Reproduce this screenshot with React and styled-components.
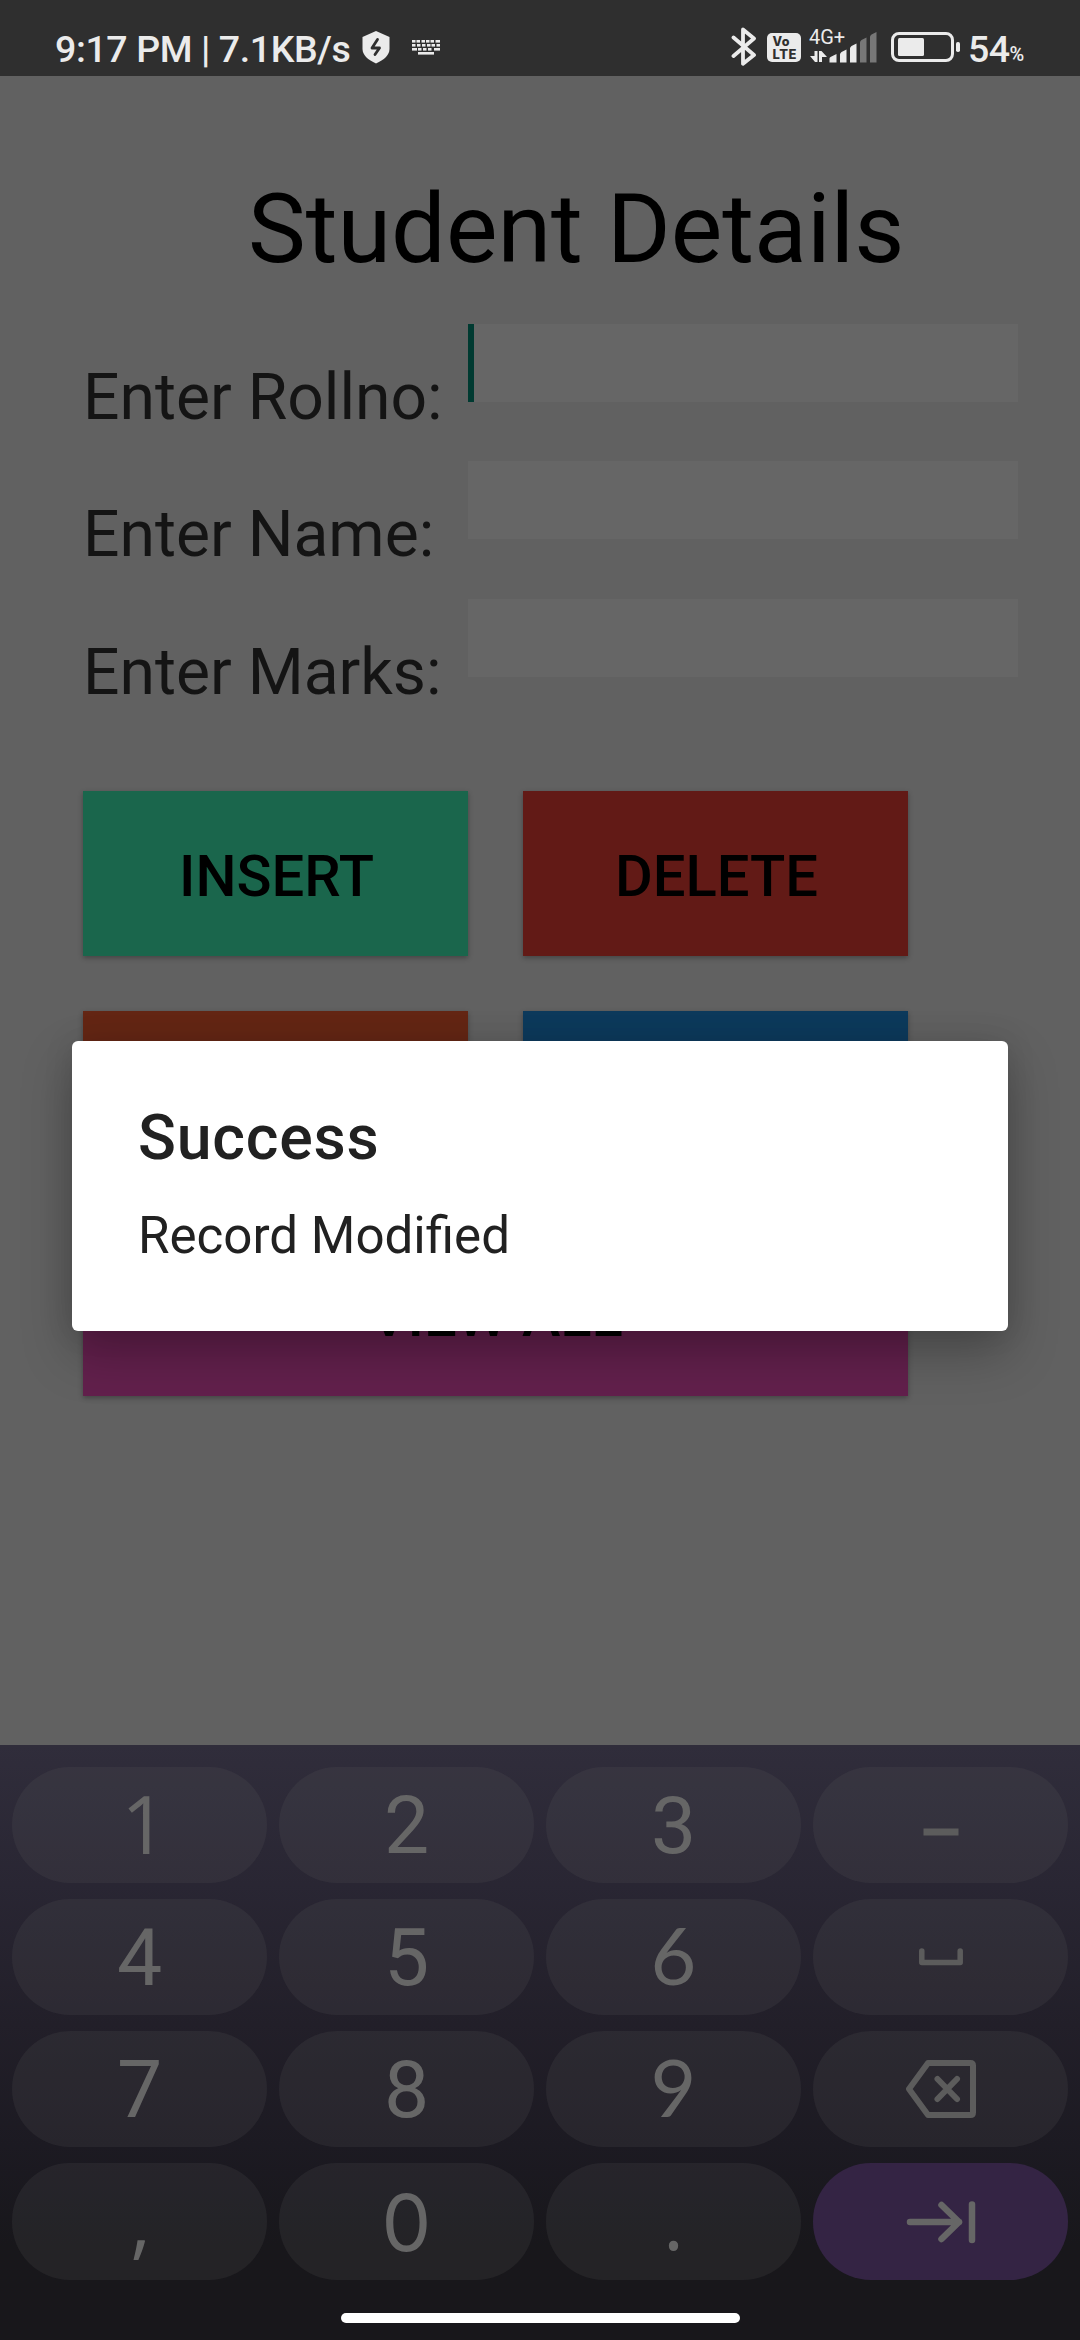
import React from "react";
import styled, { createGlobalStyle, css } from "styled-components";

const Global = createGlobalStyle`
  * { box-sizing: border-box; }
  html, body { margin: 0; padding: 0; background: #616161; }
  body { font-family: Roboto, "Noto Sans", sans-serif; overflow: hidden; }
  svg { flex: none; }
`;

const Screen = styled.div`
  position: relative;
  width: 1080px;
  height: 2340px;
  display: flex;
  flex-direction: column;
  background: #616161;
  overflow: hidden;
`;

const StatusBar = styled.header`
  display: flex;
  justify-content: space-between;
  height: 76px;
  padding: 20px 0 0 55px;
  background: #2f2f2f;
  color: #ebebeb;
`;

const StatusGroup = styled.div`
  display: flex;
  height: 56px;
  width: ${(p) => p.$width || "auto"};
`;

const Clock = styled.span`
  width: 307px;
  font-size: 37.5px;
  font-weight: 500;
  letter-spacing: -0.4px;
  line-height: 58px;
  white-space: pre;
`;

const Network = styled.div`
  display: flex;
  flex-direction: column;
  flex: none;
  width: 82px;
`;

const NetworkType = styled.span`
  height: 24px;
  padding-top: 5px;
  font-size: 20px;
  line-height: 24px;
`;

const Percent = styled.span`
  width: ${(p) => (p.$small ? "auto" : "41.5px")};
  font-size: ${(p) => (p.$small ? "20px" : "37.5px")};
  font-weight: 500;
  letter-spacing: -0.45px;
  line-height: ${(p) => (p.$small ? "68px" : "58px")};
`;

const Main = styled.main`
  flex: 1;
  padding: 97px 62px 0 83px;
`;

const Title = styled.h1`
  margin: 0 0 39px;
  padding-left: 165px;
  font-size: 97.2px;
  font-weight: 400;
  line-height: 112px;
  color: #000;
  white-space: nowrap;
`;

const Form = styled.div`
  display: grid;
  grid-template-rows: 137px 138px 137px;
`;

const Field = styled.label`
  display: flex;
`;

const FieldLabel = styled.span`
  width: 385px;
  padding-top: 36px;
  font-size: 64.2px;
  line-height: 75px;
  color: #141414;
  white-space: nowrap;
`;

const Input = styled.div`
  flex: 1;
  height: 78px;
  background: #666;
  border-left: ${(p) => (p.$focused ? "6px solid #003a31" : "0")};
`;

const Buttons = styled.div`
  display: grid;
  grid-template-columns: 385px 385px;
  grid-auto-rows: 165px;
  gap: 55px;
  margin-top: 55px;
`;

const Button = styled.button`
  grid-column: ${(p) => (p.$wide ? "1 / -1" : "auto")};
  border: 0;
  padding: 4px 0 0 2px;
  background: ${(p) => p.$color};
  color: #000;
  font: 500 57.9px/68px Roboto, sans-serif;
  box-shadow: 0 2px 5px rgba(0, 0, 0, 0.3);
`;

const Keyboard = styled.section`
  height: 595px;
  padding: 22px 12px 0;
  background: linear-gradient(#302d3b 0px, #292633 140px, #221f29 280px, #1c1a22 400px, #18171b 500px, #18171b 595px);
`;

const Keys = styled.div`
  display: grid;
  grid-template-columns: repeat(4, 255px);
  grid-template-rows: 116px 116px 116px 117px;
  gap: 16px 12px;
`;

const Key = styled.div`
  display: flex;
  align-items: center;
  justify-content: center;
  border-radius: 58px;
  background: ${(p) => (p.$accent ? "#342444" : "rgba(102, 102, 102, 0.16)")};
  color: ${(p) => (p.$accent ? "#666" : "#5c5c5c")};
`;

const faces = {
  roboto: css`font-family: Roboto, sans-serif; font-size: 80.5px; padding-top: 1px;`,
  lato: css`font-family: Lato, sans-serif; font-size: 79px; padding-bottom: 5px;`,
  inter: css`font-family: Inter, sans-serif; font-size: 79px;`,
  open: css`font-family: "Open Sans", sans-serif; font-size: 80px; padding-bottom: 5px;`,
};

const Glyph = styled.span`
  ${(p) => faces[p.$face || "roboto"]}
  padding-left: ${(p) => p.$indent || 0}px;
  line-height: 116px;
  color: #666;
`;

const HomeIndicator = styled.div`
  width: 399px;
  height: 10px;
  margin: 33px auto 0;
  border-radius: 5px;
  background: #fff;
`;

const Dialog = styled.div`
  position: absolute;
  left: 72px;
  top: 1041px;
  width: 936px;
  height: 290px;
  padding: 59px 66px 0;
  border-radius: 6px;
  background: #fff;
  color: #212121;
  box-shadow: 0 22px 50px rgba(0, 0, 0, 0.26), 0 0 30px rgba(0, 0, 0, 0.1);
`;

const DialogTitle = styled.h2`
  margin: 0;
  font-size: 62.6px;
  font-weight: 500;
  letter-spacing: 0.8px;
  line-height: 75px;
`;

const DialogText = styled.p`
  margin: 31px 0 0;
  font-size: 51.1px;
  line-height: 60px;
`;

const DashSlot = styled.span`
  display: flex;
  padding-top: 14px;
`;

const ShieldIcon = () => (
  <svg width="28" height="56" viewBox="362 20 28 56">
    <path d="M376 31L389.5 37V49C389.5 55 384 60 376 63.5C368 60 362.5 55 362.5 49V37Z" fill="#ebebeb" />
    <path d="M377.5 39.5L372 48H379.5L375 54.5" fill="none" stroke="#2f2f2f" strokeWidth="2.8" strokeLinecap="round" strokeLinejoin="round" />
  </svg>
);

const keyRows = [
  [40, [412, 416.5, 421.5, 426, 430.5, 435.5]],
  [44, [412, 417, 422, 427, 431.5, 436.5]],
  [48, [412, 418, 423, 428, 434]],
];

const KeyboardIcon = () => (
  <svg width="74" height="56" viewBox="390 20 74 56" fill="#ebebeb">
    {keyRows.map(([y, xs]) => xs.map((x, i) => (
      <rect key={`${x}-${y}`} x={x} y={y} width={i === xs.length - 1 ? 440 - x : i === 0 && y === 48 ? 5 : 3.5} height="2.6" />
    )))}
    <rect x="418" y="52" width="16" height="2.6" />
  </svg>
);

const BluetoothIcon = () => (
  <svg width="33" height="56" viewBox="731 20 33 56" fill="none" stroke="#ebebeb" strokeWidth="3.8" strokeLinecap="round" strokeLinejoin="round">
    <path d="M733.5 37.5L754 55L743 63.8V29.5L754 38.5L733.5 56" />
  </svg>
);

const VolteIcon = () => (
  <svg width="45" height="56" viewBox="764 20 45 56">
    <rect x="767" y="33" width="34" height="29" rx="5" fill="#ebebeb" />
    <g fill="#2f2f2f" fontFamily="Inter, sans-serif" fontWeight="800">
      <text x="772.5" y="46" fontSize="12.5" textLength="17">Vo</text>
      <text x="772.5" y="58.5" fontSize="13" textLength="24">LTE</text>
    </g>
  </svg>
);

const SignalIcon = () => (
  <svg width="70" height="32" viewBox="809 44 70 32" overflow="visible" fill="#ebebeb">
    <path d="M814.5 51H817.5V62H815L810 56H814.5ZM819 51H821.5L827 57H822V62H819Z" />
    <path d="M829.5 62.5V58.5Q829.5 57.5 830.5 57L836.5 54V62.5ZM840 62.5V54.5Q840 53 841.5 52L846.5 49.5V62.5ZM850 62.5V48.5Q850 47 851.5 46L856.5 43.5V62.5Z" />
    <path d="M860 62.5V42.5Q860 41 861.5 40L866.5 37.5V62.5ZM870 62.5V37Q870 35.5 871.5 34.5L876.5 32V62.5Z" fill="#777" />
  </svg>
);

const BatteryIcon = () => (
  <svg width="77" height="56" viewBox="891 20 77 56">
    <rect x="892.5" y="33.5" width="60" height="27" rx="6.5" fill="none" stroke="#ebebeb" strokeWidth="3" />
    <rect x="898" y="38" width="26" height="18" rx="1.5" fill="#ebebeb" />
    <rect x="956" y="42" width="4" height="10" rx="1.8" fill="#ebebeb" />
  </svg>
);

const DashIcon = () => (
  <svg width="36" height="8" viewBox="0 0 36 8">
    <rect x="0.5" y="0.5" width="35" height="7" fill="currentColor" />
  </svg>
);

const SpaceIcon = () => (
  <svg width="44" height="18" viewBox="0 0 44 18" fill="none" stroke="currentColor" strokeWidth="5.5" strokeLinecap="round" strokeLinejoin="round">
    <path d="M2.8 3V14.5H41.2V3" />
  </svg>
);

const BackspaceIcon = () => (
  <svg width="70" height="60" viewBox="0 0 70 60" fill="none" stroke="currentColor" strokeWidth="6" strokeLinecap="round" strokeLinejoin="round">
    <path d="M22 4H64.5Q67 4 67 6.5V53.5Q67 56 64.5 56H22L3 30Z" />
    <path d="M31.5 20L51 40M51 20L31.5 40" />
  </svg>
);

const NextFieldIcon = () => (
  <svg width="70" height="44" viewBox="0 0 70 44" fill="none" stroke="currentColor" strokeWidth="6.5" strokeLinecap="round" strokeLinejoin="round">
    <path d="M4 22H53M35.5 5L53 22L35.5 39" />
    <path d="M66 4.5V40" />
  </svg>
);

const fields = ["Enter Rollno:", "Enter Name:", "Enter Marks:"];

const actions = [
  { id: "insert", label: "INSERT", color: "#1a664c" },
  { id: "delete", label: "DELETE", color: "#621a16" },
  { id: "modify", color: "#642614" },
  { id: "view", color: "#0d3a5c" },
  { id: "view-all", label: "VIEW ALL", color: "#62204c", wide: true },
];

const keys = [
  { text: "1", face: "open", indent: 9 }, { text: "2" }, { text: "3" }, { icon: <DashSlot><DashIcon /></DashSlot> },
  { text: "4" }, { text: "5" }, { text: "6", face: "lato" }, { icon: <SpaceIcon /> },
  { text: "7" }, { text: "8" }, { text: "9", face: "lato" }, { icon: <BackspaceIcon /> },
  { text: ",", face: "open", indent: 2 }, { text: "0", face: "inter" }, { text: ".", face: "open" }, { icon: <NextFieldIcon />, accent: true },
];

export default function App() {
  return (
    <Screen>
      <Global />
      <StatusBar>
        <StatusGroup>
          <Clock>9:17 PM | 7.1KB/s</Clock>
          <ShieldIcon />
          <KeyboardIcon />
        </StatusGroup>
        <StatusGroup $width="349px">
          <BluetoothIcon />
          <VolteIcon />
          <Network>
            <NetworkType>4G+</NetworkType>
            <SignalIcon />
          </Network>
          <BatteryIcon />
          <Percent>54</Percent>
          <Percent $small>%</Percent>
        </StatusGroup>
      </StatusBar>
      <Main>
        <Title>Student Details</Title>
        <Form>
          {fields.map((label, i) => (
            <Field key={label}>
              <FieldLabel>{label}</FieldLabel>
              <Input $focused={i === 0} />
            </Field>
          ))}
        </Form>
        <Buttons>
          {actions.map((a) => (
            <Button key={a.id} $color={a.color} $wide={a.wide}>{a.label}</Button>
          ))}
        </Buttons>
      </Main>
      <Keyboard>
        <Keys>
          {keys.map((k, i) => (
            <Key key={i} $accent={k.accent}>
              {k.icon || <Glyph $face={k.face} $indent={k.indent}>{k.text}</Glyph>}
            </Key>
          ))}
        </Keys>
        <HomeIndicator />
      </Keyboard>
      <Dialog role="dialog">
        <DialogTitle>Success</DialogTitle>
        <DialogText>Record Modified</DialogText>
      </Dialog>
    </Screen>
  );
}
